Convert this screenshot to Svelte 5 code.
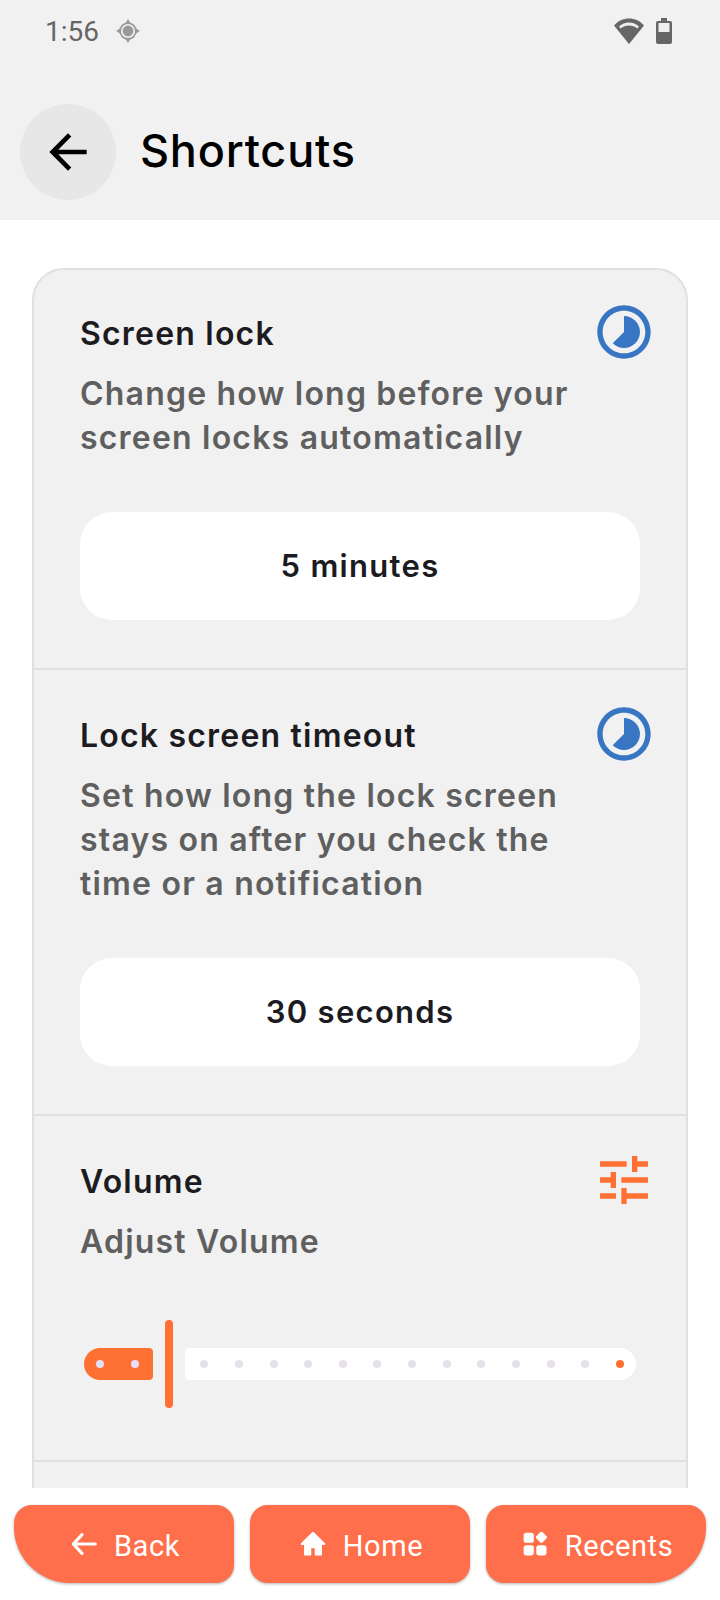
<script>
  const ticks = Array.from({ length: 13 });
  const sections = [
    { title: 'Screen lock', lines: ['Change how long before your', 'screen locks automatically'], value: '5 minutes' },
    { title: 'Lock screen timeout', lines: ['Set how long the lock screen', 'stays on after you check the', 'time or a notification'], value: '30 seconds' }
  ];
</script>

<div class="screen">
  <header class="top">
    <div class="status">
      <div class="status-left">
        <span class="time">1:56</span>
        <svg viewBox="0 0 24 24" width="24" height="24"><path fill="#999" d="M12 0l2.600 4.200h-5.200zM12 24l-2.600-4.200h5.200zM0 12l4.200-2.600v5.200zM24 12l-4.200 2.600V9.400z"/><circle cx="12" cy="12" r="8.700" fill="#999"/><circle cx="12" cy="12" r="7" fill="#f1f1f1"/><circle cx="12" cy="12" r="5.400" fill="#999"/></svg>
      </div>
      <div class="status-right">
        <svg viewBox="0 0 30 26" width="30" height="26"><path fill="#666" d="M15 26L0 7.500C4 3 9 0.500 15 0.500S26 3 30 7.500z"/><path fill="#eee" d="M5 8.500C8 5.800 11.200 4.400 15 4.400s7 1.400 10 4.100l-1.600 2C21 8.500 18.200 7.400 15 7.400s-6 1.100-8.400 3.100z"/></svg>
        <svg viewBox="0 0 16 26" width="16" height="26"><path fill="#666" d="M5 0h6v3h3a2 2 0 0 1 2 2v19a2 2 0 0 1-2 2H2a2 2 0 0 1-2-2V5a2 2 0 0 1 2-2h3z"/><rect x="2.500" y="5" width="11" height="9" fill="#eee"/></svg>
      </div>
    </div>
    <div class="bar">
      <div class="back">
        <svg viewBox="0 0 24 24" width="56" height="56"><path fill="#000" d="M20 11H7.830l5.590-5.590L12 4l-8 8 8 8 1.410-1.410L7.830 13H20z"/></svg>
      </div>
      <h1>Shortcuts</h1>
    </div>
  </header>

  <main>
    <div class="card">
      {#each sections as s}
        <section>
          <div class="head">
            <h2>{s.title}</h2>
            <svg viewBox="0 0 24 24" width="64" height="64"><path fill="#3876c4" d="M16.240 7.760C15.070 6.590 13.540 6 12 6v6l-4.240 4.240c2.340 2.340 6.140 2.340 8.490 0 2.340-2.340 2.340-6.140-.01-8.480zM12 2C6.480 2 2 6.480 2 12s4.480 10 10 10 10-4.480 10-10S17.520 2 12 2zm0 18c-4.420 0-8-3.580-8-8s3.580-8 8-8 8 3.580 8 8-3.580 8-8 8z"/></svg>
          </div>
          <p>{#each s.lines as l}<span>{l}</span>{/each}</p>
          <div class="value">{s.value}</div>
        </section>
      {/each}
      <section class="vol">
        <div class="head">
          <h2>Volume</h2>
          <svg viewBox="0 0 24 24" width="64" height="64"><path fill="#ff7033" d="M3 17v2h6v-2H3zM3 5v2h10V5H3zm10 16v-2h8v-2h-8v-2h-2v6h2zM7 9v2H3v2h4v2h2V9H7zm14 4v-2H11v2h10zm-6-4h2V7h4V5h-4V3h-2v6z"/></svg>
        </div>
        <p><span>Adjust Volume</span></p>
        <div class="slider">
          <div class="active"><i></i><i></i></div>
          <div class="thumb"></div>
          <div class="track">
            {#each ticks as _, i}<i class:end={i === 12}></i>{/each}
          </div>
        </div>
      </section>
      <section class="last"></section>
    </div>
  </main>

  <footer>
    <button class="left">
      <svg viewBox="0 0 24 24" width="32" height="32"><path fill="none" stroke="#fff" stroke-width="2.400" stroke-linecap="round" stroke-linejoin="round" d="M20.500 12H4M10.500 5L4 12l6.500 7"/></svg>
      <span>Back</span>
    </button>
    <button>
      <svg viewBox="0 0 24 24" width="32" height="32"><path fill="#fff" stroke="#fff" stroke-width="1.400" stroke-linejoin="round" d="M12 3.500L3.500 12H6v8h4v-5.500h4V20h4v-8h2.500z"/></svg>
      <span>Home</span>
    </button>
    <button class="right">
      <svg viewBox="0 0 24 24" width="32" height="32"><g fill="#fff"><rect x="3.500" y="3.500" width="7.600" height="7.600" rx="2"/><rect x="3.500" y="13" width="7.600" height="7.600" rx="2"/><rect x="13" y="13" width="7.600" height="7.600" rx="2"/><rect x="13.500" y="3.700" width="6.600" height="6.600" rx="1.300" transform="rotate(45 16.800 7)"/></g></svg>
      <span>Recents</span>
    </button>
  </footer>
</div>

<style>
  :global(body) { margin: 0; background: #fff; }
  .screen { width: 720px; height: 1600px; display: flex; flex-direction: column; overflow: hidden; font-family: Inter, "Noto Sans", sans-serif; }
  .top { height: 220px; background: #f1f1f1; flex: none; }
  .status { height: 62px; display: flex; justify-content: space-between; align-items: center; padding: 0 48px 0 45px; }
  .status-left, .status-right { display: flex; align-items: center; }
  .status-right { gap: 12px; }
  .status-left { gap: 17px; }
  .time { font: 400 28px Roboto, sans-serif; color: #666; }
  .bar { margin-top: 42px; height: 96px; display: flex; align-items: center; padding-left: 20px; gap: 24px; }
  .back { width: 96px; height: 96px; border-radius: 50%; background: #e7e7e7; display: flex; align-items: center; justify-content: center; }
  h1 { margin: 0 0 4px; font-size: 45px; font-weight: 500; color: #000; letter-spacing: 0.8px; }
  main { flex: 1; min-height: 0; overflow: hidden; padding: 48px 32px 0; }
  .card { background: #f1f1f1; border: 2px solid #e0e0e0; border-radius: 32px; }
  section { padding: 30px 46px 48px; border-bottom: 2px solid #e0e0e0; }
  section + section { padding-top: 32px; }
  .head { display: flex; justify-content: space-between; align-items: center; height: 64px; margin-right: -16px; }
  h2 { margin: 2px 0 0; font-size: 32px; font-weight: 600; color: #1c1b1f; letter-spacing: 1.2px; }
  p { margin: 8px 0 0; font-size: 32px; line-height: 44px; color: #5f5f5f; font-weight: 600; letter-spacing: 1.2px; }
  p span { display: block; }
  .value { margin-top: 52px; height: 108px; box-sizing: border-box; padding-bottom: 2px; border-radius: 32px; background: #fff; display: flex; align-items: center; justify-content: center; font-size: 31px; font-weight: 600; color: #1c1b1f; letter-spacing: 1.3px; }
  .vol { padding-bottom: 52px; }
  .slider { margin: 56px 4px 0; height: 88px; display: flex; align-items: center; gap: 12px; }
  .active { flex: none; width: 69.330px; height: 32px; box-sizing: border-box; padding: 0 14.670px 0 12px; background: #ff7033; border-radius: 16px 4px 4px 16px; display: flex; align-items: center; justify-content: space-between; }
  .active i { width: 8px; height: 8px; border-radius: 50%; background: #e8def8; }
  .thumb { flex: none; width: 8px; height: 88px; border-radius: 4px; background: #ff7033; }
  .track { flex: 1; height: 32px; box-sizing: border-box; padding: 0 12px 0 15px; background: #fff; border-radius: 4px 16px 16px 4px; display: flex; align-items: center; justify-content: space-between; }
  .track i { width: 8px; height: 8px; border-radius: 50%; background: #e6e0e9; }
  .track i.end { background: #ff7033; }
  .last { height: 60px; border-bottom: 0; }
  footer { flex: none; height: 112px; box-sizing: border-box; padding: 17px 14px 0; display: flex; gap: 16px; align-items: flex-start; background: #fff; }
  button { flex: 1; height: 78px; border: 0; border-radius: 18px; background: #ff6f4b; color: #fff; box-shadow: 0 1px 3px rgba(0,0,0,.3); display: flex; align-items: center; justify-content: center; gap: 14px; padding: 0; font: 400 29px Roboto, sans-serif; letter-spacing: 0.6px; }
  button span { margin-top: 3px; }
  .left { border-bottom-left-radius: 56px; }
  .right { border-bottom-right-radius: 56px; }
</style>
